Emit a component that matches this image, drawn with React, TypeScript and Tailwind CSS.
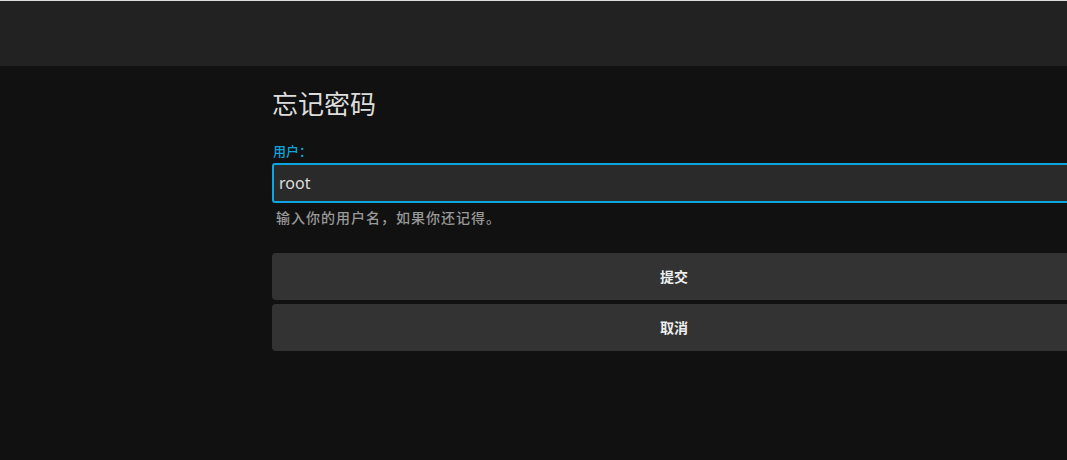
import React from "react";

export default function App() {
  const font = { fontFamily: '"Noto Sans", "Noto Sans CJK SC", sans-serif' };
  return (
    <div className="w-[1067px] h-[460px] bg-[#111111] overflow-hidden" style={font}>
      <div className="h-[66px] bg-[#222222] border-t border-[#dcdcdc]" />
      <div className="ml-[272px] w-[804px] flex flex-col">
        <h1 className="mt-[20px] h-[36px] leading-[36px] text-[26px] text-[#dddddd]">忘记密码</h1>
        <label className="mt-[20px] h-[18px] leading-[18px] text-[13px] font-medium text-[#12a3dc] pl-[1px] font-['Noto_Sans_CJK_SC',sans-serif]">用户：</label>
        <div className="mt-[3px] h-[40px] rounded-[3px] border-2 border-[#0ba6df] bg-[#2a2a2a] flex items-center px-[5px] text-[16px] text-[#dddddd]">
          root
        </div>
        <div className="mt-[5px] h-[20px] leading-[20px] text-[14px] font-medium text-[#999999] pl-[4px] tracking-[1px]">输入你的用户名，如果你还记得。</div>
        <button className="mt-[25px] h-[47px] rounded-[4px] bg-[#333333] text-[14px] font-bold text-[#eeeeee]">提交</button>
        <button className="mt-[4px] h-[47px] rounded-[4px] bg-[#333333] text-[14px] font-bold text-[#eeeeee]">取消</button>
      </div>
    </div>
  );
}
